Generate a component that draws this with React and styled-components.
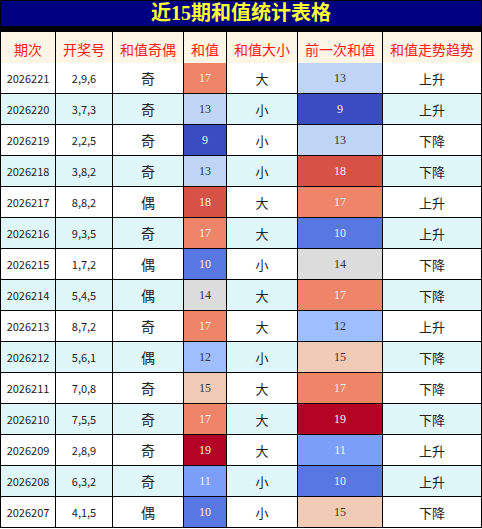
import React from "react";
import styled, { createGlobalStyle } from "styled-components";

const GlobalStyle = createGlobalStyle`
  body {
    margin: 0;
    background: #fff;
    font-family: "Noto Sans CJK SC", "Noto Sans", sans-serif;
  }
`;

const heat = {
  9: ["#3b4cc0", "#f1f1f1"],
  10: ["#5977e3", "#f1f1f1"],
  11: ["#7b9ff9", "#f1f1f1"],
  12: ["#9ebeff", "#333"],
  13: ["#c0d4f5", "#333"],
  14: ["#dddcdc", "#333"],
  15: ["#f2cbb7", "#333"],
  16: ["#f7ac8e", "#333"],
  17: ["#ee8468", "#f1f1f1"],
  18: ["#d65244", "#f1f1f1"],
  19: ["#b40426", "#f1f1f1"],
};

const headers = ["期次", "开奖号", "和值奇偶", "和值", "和值大小", "前一次和值", "和值走势趋势"];

const rows = [
  ["2026221", "2,9,6", "奇", 17, "大", 13, "上升"],
  ["2026220", "3,7,3", "奇", 13, "小", 9, "上升"],
  ["2026219", "2,2,5", "奇", 9, "小", 13, "下降"],
  ["2026218", "3,8,2", "奇", 13, "小", 18, "下降"],
  ["2026217", "8,8,2", "偶", 18, "大", 17, "上升"],
  ["2026216", "9,3,5", "奇", 17, "大", 10, "上升"],
  ["2026215", "1,7,2", "偶", 10, "小", 14, "下降"],
  ["2026214", "5,4,5", "偶", 14, "大", 17, "下降"],
  ["2026213", "8,7,2", "奇", 17, "大", 12, "上升"],
  ["2026212", "5,6,1", "偶", 12, "小", 15, "下降"],
  ["2026211", "7,0,8", "奇", 15, "大", 17, "下降"],
  ["2026210", "7,5,5", "奇", 17, "大", 19, "下降"],
  ["2026209", "2,8,9", "奇", 19, "大", 11, "上升"],
  ["2026208", "6,3,2", "奇", 11, "小", 10, "上升"],
  ["2026207", "4,1,5", "偶", 10, "小", 15, "下降"],
];

function App() {
  return (
    <>
      <GlobalStyle />
      <Table>
        <Title>近15期和值统计表格</Title>
        {headers.map((h) => (
          <HeadCell key={h}>{h}</HeadCell>
        ))}
        {rows.map((r, i) => {
          const striped = i % 2 === 1;
          return (
            <React.Fragment key={r[0]}>
              <Cell $striped={striped} $size={11}>{r[0]}</Cell>
              <Cell $striped={striped} $size={11}>{r[1]}</Cell>
              <Cell $striped={striped} $size={14}>{r[2]}</Cell>
              <HeatCell $bg={heat[r[3]][0]} $fg={heat[r[3]][1]}>{r[3]}</HeatCell>
              <Cell $striped={striped} $size={13}>{r[4]}</Cell>
              <HeatCell $bg={heat[r[5]][0]} $fg={heat[r[5]][1]}>{r[5]}</HeatCell>
              <Cell $striped={striped} $size={13}>{r[6]}</Cell>
            </React.Fragment>
          );
        })}
      </Table>
    </>
  );
}

export default App;

const Table = styled.div`
  width: 482px;
  box-sizing: border-box;
  display: grid;
  grid-template-columns: 54px 56px 70px 42px 70px 84px 98px;
  grid-auto-rows: 30px;
  gap: 1px;
  background: #000;
  border: 1px solid #000;
`;

const Title = styled.div`
  grid-column: 1 / -1;
  height: 25px;
  margin-bottom: 1px;
  background: #000080;
  color: #ffff33;
  font-family: "Liberation Serif", "Noto Sans CJK SC", serif;
  font-weight: bold;
  font-size: 20px;
  line-height: 25px;
  text-align: center;
`;

const HeadCell = styled.div`
  height: 34px;
  background: #fdf5e6;
  color: #ff1a1a;
  font-size: 14px;
  display: flex;
  align-items: center;
  justify-content: center;
`;

const Cell = styled.div`
  background: ${(p) => (p.$striped ? "#e0f7f9" : "#fff")};
  color: #222;
  font-size: ${(p) => p.$size}px;
  display: flex;
  align-items: center;
  justify-content: center;
`;

const HeatCell = styled.div`
  background: ${(p) => p.$bg};
  color: ${(p) => p.$fg};
  font-family: "Liberation Serif", serif;
  font-size: 12px;
  display: flex;
  align-items: center;
  justify-content: center;
`;
